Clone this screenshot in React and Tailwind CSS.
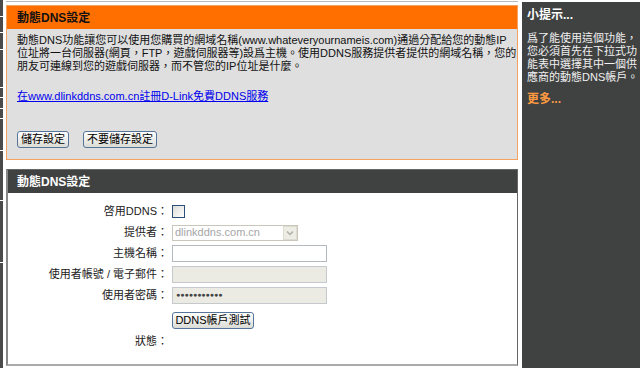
import React from "react";

const font = { fontFamily: '"Liberation Sans", "Noto Sans CJK TC", sans-serif' };

function Btn({ children, className = "" }) {
  return (
    <button
      className={
        "h-[17px] px-0 whitespace-nowrap border border-[#56739a] rounded-[3px] bg-gradient-to-b from-white to-[#dcdcd6] text-[11px] leading-[15px] text-black flex items-center justify-center " +
        className
      }
      style={font}
    >
      {children}
    </button>
  );
}

function Row({ label, children, h = "h-[21px]" }) {
  return (
    <div className={"flex items-center " + h}>
      <div className="w-[164px] shrink-0 text-right text-[11px] text-[#222] pr-[4px] whitespace-nowrap">{label}</div>
      <div className="flex items-center">{children}</div>
    </div>
  );
}

export default function App() {
  const ticks = [16, 32, 49, 87, 97, 108, 118, 150, 200, 262];
  return (
    <div className="w-[640px] h-[368px] bg-white flex overflow-hidden text-[11px]" style={font}>
      {/* left nav remnant */}
      <div className="relative w-[3px] h-full bg-[#4a4a4a] shrink-0">
        {ticks.map((t) => (
          <div key={t} className="absolute left-0 w-[3px] h-[1px] bg-white" style={{ top: t }} />
        ))}
      </div>

      {/* main column */}
      <div className="w-[512px] ml-[3px] shrink-0 flex flex-col">
        <div className="h-[1px] bg-[#bbb] mt-[1px] mb-[3px]" />
        {/* orange box */}
        <div className="border border-[#f5a260] bg-[#dfdfdf] h-[155px] flex flex-col">
          <div className="h-[23px] bg-[#ff6f00] flex items-center pl-[10px] font-bold text-[12px] text-[#111]">
            動態DNS設定
          </div>
          <div className="pl-[10px] pt-[5px] leading-[13px] text-[11px] text-[#111]">
            動態DNS功能讓您可以使用您購買的網域名稱(www.whateveryournameis.com)通過分配給您的動態IP
            <br />
            位址將一台伺服器(網頁，FTP，遊戲伺服器等)設爲主機。使用DDNS服務提供者提供的網域名稱，您的
            <br />
            朋友可連線到您的遊戲伺服器，而不管您的IP位址是什麼。
          </div>
          <div className="pl-[10px] mt-[17px] leading-[13px]">
            <a className="text-[#0000ee] underline text-[11px]">在www.dlinkddns.com.cn註冊D-Link免費DDNS服務</a>
          </div>
          <div className="pl-[10px] mt-[28px] flex gap-[14px]">
            <Btn className="w-[52px]">儲存設定</Btn>
            <Btn className="w-[74px]">不要儲存設定</Btn>
          </div>
        </div>

        {/* dark box */}
        <div className="mt-[9px] border border-[#666] border-b-[2px] border-b-[#aaa] border-l-[2px] border-l-[#888] h-[197px] bg-white flex flex-col">
          <div className="h-[23px] bg-[#404242] flex items-center pl-[9px] font-bold text-[12px] text-white">
            動態DNS設定
          </div>
          <div className="pt-[8px] flex flex-col">
            <Row label="啓用DDNS：">
              <div className="w-[13px] h-[13px] border border-[#2c4f7c] bg-gradient-to-br from-[#dcdcd6] to-white" />
            </Row>
            <Row label="提供者：">
              <div className="w-[126px] h-[16px] border border-[#c9c7ba] bg-white flex items-center justify-between">
                <span className="pl-[2px] text-[#a6a6a6] text-[11px]">dlinkddns.com.cn</span>
                <div className="w-[14px] h-[14px] bg-[#eeede5] border border-[#dedcd0] flex items-center justify-center">
                  <svg width="8" height="6" viewBox="0 0 8 6">
                    <path d="M1 1.5 L4 4.5 L7 1.5" stroke="#b0afa5" strokeWidth="1.5" fill="none" />
                  </svg>
                </div>
              </div>
            </Row>
            <Row label="主機名稱：">
              <div className="w-[155px] h-[17px] border border-[#b3b9bf] bg-white" />
            </Row>
            <Row label="使用者帳號 / 電子郵件：">
              <div className="w-[155px] h-[17px] border border-[#c5c8cc] bg-[#ebebe4]" />
            </Row>
            <Row label="使用者密碼：">
              <div className="w-[155px] h-[17px] border border-[#c5c8cc] bg-[#ebebe4] flex items-center pl-[3px] text-[7px] text-[#444]">
                ●●●●●●●●●●●
              </div>
            </Row>
            <Row label="" h="h-[29px]">
              <Btn className="w-[82px]">DDNS帳戶測試</Btn>
            </Row>
            <Row label="狀態：" h="h-[12px]">
              <span />
            </Row>
          </div>
        </div>
      </div>

      {/* sidebar */}
      <div className="ml-[4px] mt-[2px] w-[118px] bg-[#404242] shrink-0 flex flex-col pl-[5px] pt-[5px] text-white">
        <div className="font-bold text-[12px] leading-[16px]">小提示...</div>
        <div className="mt-[9px] text-[11px] leading-[13px] text-[#f0f0f0]">
          爲了能使用這個功能，
          <br />
          您必須首先在下拉式功
          <br />
          能表中選擇其中一個供
          <br />
          應商的動態DNS帳戶。
        </div>
        <div className="mt-[6px] font-bold text-[12px] text-[#ff9a40]">更多...</div>
      </div>
    </div>
  );
}
